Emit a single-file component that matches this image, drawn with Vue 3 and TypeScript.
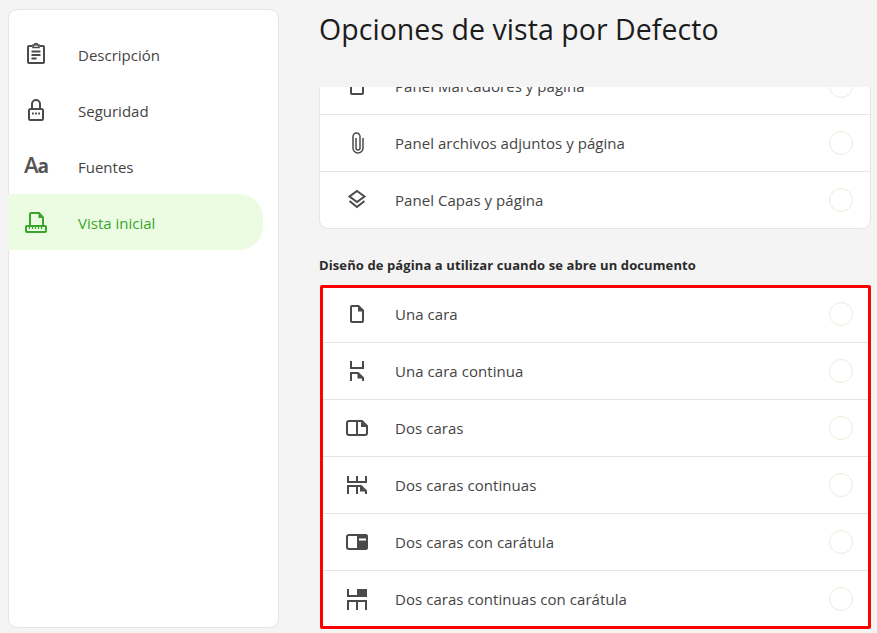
<script setup lang="ts">
interface Row { label: string; icon: string }
const nav: { label: string; icon: string; active?: boolean }[] = [
  { label: 'Descripción', icon: 'clip' },
  { label: 'Seguridad', icon: 'lock' },
  { label: 'Fuentes', icon: 'font' },
  { label: 'Vista inicial', icon: 'view', active: true },
]
const panels: Row[] = [
  { label: 'Panel Marcadores y página', icon: 'mark' },
  { label: 'Panel archivos adjuntos y página', icon: 'attach' },
  { label: 'Panel Capas y página', icon: 'layers' },
]
const layouts: Row[] = [
  { label: 'Una cara', icon: 'single' },
  { label: 'Una cara continua', icon: 'singleCont' },
  { label: 'Dos caras', icon: 'double' },
  { label: 'Dos caras continuas', icon: 'doubleCont' },
  { label: 'Dos caras con carátula', icon: 'cover' },
  { label: 'Dos caras continuas con carátula', icon: 'coverCont' },
]
</script>

<template>
  <div class="page">
    <aside class="side">
      <div v-for="n in nav" :key="n.label" class="nav" :class="{ active: n.active }">
        <span class="nav-icon">
          <svg v-if="n.icon === 'clip'" viewBox="0 0 24 24" width="24" height="24" fill="none" stroke="currentColor" stroke-width="2">
            <path d="M8 4H5a1 1 0 0 0-1 1v15a1 1 0 0 0 1 1h14a1 1 0 0 0 1-1V5a1 1 0 0 0-1-1h-3" />
            <path d="M9 5.500V3h2V1.800h2V3h2v2.500z" stroke-width="1.600" />
            <path d="M7.500 9.500h9M7.500 13h9M7.500 16.500h5" />
          </svg>
          <svg v-else-if="n.icon === 'lock'" viewBox="0 0 24 24" width="24" height="24" fill="none" stroke="currentColor" stroke-width="2">
            <rect x="5" y="11" width="14" height="11" rx="1.500" />
            <path d="M8 11V6a4 4 0 0 1 8 0v5" />
            <path d="M8 15.500h1.800M11.100 15.500h1.800M14.200 15.500H16" stroke-width="1.800" />
          </svg>
          <span v-else-if="n.icon === 'font'" class="aa"><span class="big">A</span><span class="small">a</span></span>
          <svg v-else viewBox="0 0 24 24" width="24" height="24" fill="none" stroke="currentColor" stroke-width="2">
            <path d="M6 15V4a1 1 0 0 1 1-1h8l4 4.500V15" />
            <path d="M14.500 3v5H19.500z" fill="currentColor" stroke="none" />
            <rect x="2" y="16" width="20" height="6" rx="1" />
            <path d="M5.500 17v2M8.500 17v2M11.500 17v2M14.500 17v2M17.500 17v2" stroke-width="1.200" />
          </svg>
        </span>
        <span class="nav-label">{{ n.label }}</span>
      </div>
    </aside>

    <main class="main">
      <h1 class="title">Opciones de vista por Defecto</h1>
      <div class="scroll">
        <section class="card panels">
          <div v-for="r in panels" :key="r.label" class="row">
            <span class="row-icon">
              <svg v-if="r.icon === 'mark'" viewBox="0 0 24 24" width="24" height="24" fill="none" stroke="currentColor" stroke-width="2">
                <rect x="6" y="3" width="12" height="17" rx="1" />
              </svg>
              <svg v-else-if="r.icon === 'attach'" viewBox="0 0 24 24" width="24" height="24" fill="none" stroke="currentColor" stroke-width="1.500">
                <path d="M11 7v10a2 2 0 0 0 4 0V5.500a3.500 3.500 0 0 0-7 0V17a5 5 0 0 0 10 0V7" />
              </svg>
              <svg v-else viewBox="0 0 24 24" width="24" height="24" fill="none" stroke="currentColor" stroke-width="2">
                <path d="M12 3 19.500 8.500 12 14 4.500 8.500z" />
                <path d="M4.500 13 12 19l7.500-6" />
              </svg>
            </span>
            <span class="row-label">{{ r.label }}</span>
            <span class="radio"></span>
          </div>
        </section>

        <h2 class="sub">Diseño de página a utilizar cuando se abre un documento</h2>

        <section class="card marked">
          <div v-for="r in layouts" :key="r.label" class="row">
            <span class="row-icon">
              <svg viewBox="0 0 24 24" width="24" height="24" fill="none" stroke="currentColor" stroke-width="2">
                <template v-if="r.icon === 'single'">
                  <path d="M7 4h6.500L18 8.500V19a1 1 0 0 1-1 1H7a1 1 0 0 1-1-1V5a1 1 0 0 1 1-1z" />
                  <path d="M13 4v5.500h5z" fill="currentColor" stroke="none" />
                </template>
                <template v-else-if="r.icon === 'singleCont'">
                  <path d="M6 2v7h12V2" />
                  <path d="M6 22v-8h7l5 5v3" />
                  <path d="M12.500 14v5.500H18z" fill="currentColor" stroke="none" />
                </template>
                <template v-else-if="r.icon === 'double'">
                  <path d="M4 5h13l5 5v7a2 2 0 0 1-2 2H4a2 2 0 0 1-2-2V7a2 2 0 0 1 2-2zM12 5v14" />
                  <path d="M16 5v6h6z" fill="currentColor" stroke="none" />
                </template>
                <template v-else-if="r.icon === 'doubleCont'">
                  <path d="M3 3v6h18V3M12 3v6" />
                  <path d="M3 21v-8h13l5 5v3M12 13v8" />
                  <path d="M15 13v5.500h6z" fill="currentColor" stroke="none" />
                </template>
                <template v-else-if="r.icon === 'cover'">
                  <rect x="2" y="5" width="20" height="14" rx="2" />
                  <path d="M12 4h8a3 3 0 0 1 3 3v10a3 3 0 0 1-3 3h-8z" fill="currentColor" stroke="none" />
                  <rect x="14" y="8.500" width="7" height="2" fill="#fff" stroke="none" />
                </template>
                <template v-else>
                  <path d="M3 2v7h9" />
                  <rect x="12" y="2" width="10" height="8" fill="currentColor" stroke="none" />
                  <path d="M3 23v-9h18v9M12 14v9" />
                </template>
              </svg>
            </span>
            <span class="row-label">{{ r.label }}</span>
            <span class="radio"></span>
          </div>
        </section>
      </div>
    </main>
  </div>
</template>

<style>
html, body { margin: 0; background: #f4f4f4; overflow: hidden; }
</style>

<style scoped>
.page {
  display: flex;
  height: 633px;
  width: 877px;
  box-sizing: border-box;
  padding: 9px 6px 5px 8px;
  font-family: "Open Sans", "Noto Sans", sans-serif;
  font-size: 15px;
  color: #444;
  background: #f4f4f4;
  overflow: hidden;
}
.side {
  width: 271px;
  flex: none;
  box-sizing: border-box;
  padding: 16px 15px 0 0;
  background: #fff;
  border: 1px solid #e5e5e5;
  border-radius: 9px;
}
.nav {
  display: flex;
  align-items: center;
  gap: 30px;
  height: 56px;
  margin-left: -1px;
  padding-left: 16px;
}
.nav-label { padding-top: 2px; }
.nav-icon {
  width: 24px;
  height: 24px;
  display: flex;
  align-items: center;
  justify-content: center;
  color: #4a4a4a;
}
.nav.active {
  background: #ebfce3;
  color: #38a52d;
  border-radius: 0 24px 24px 0;
}
.nav.active .nav-icon { color: #38a52d; }
.aa {
  display: flex;
  align-items: baseline;
  font-family: "Open Sans", sans-serif;
  line-height: 22px;
  margin: 0 0 2px 1px;
  color: #555;
}
.big { font-size: 22px; font-weight: 600; }
.small { font-size: 19px; font-weight: 700; margin-left: -1px; }
.main {
  margin-left: 40px;
  flex: 1;
  min-width: 0;
  display: flex;
  flex-direction: column;
  margin-top: -9px;
  height: 633px;
}
.title {
  margin: 0;
  height: 87px;
  flex: none;
  box-sizing: border-box;
  padding-top: 9px;
  font-size: 28.500px;
  line-height: 40px;
  font-weight: 400;
  color: #1c1c1c;
  letter-spacing: 0.05px;
}
.scroll {
  flex: 1;
  overflow: hidden;
}
.card {
  background: #fff;
  border: 1px solid #e5e5e5;
  border-radius: 9px;
}
.panels {
  margin-top: -29px;
  border-top: none;
}
.sub {
  margin: 27px 0 11px;
  font-size: 13px;
  line-height: 18px;
  font-weight: 700;
  color: #2b2b2b;
  letter-spacing: 0.1px;
}
.marked {
  margin-left: 1px;
  border: 3px solid #fe0000;
  border-radius: 2px;
}
.row {
  display: flex;
  align-items: center;
  height: 57px;
  box-sizing: border-box;
  border-top: 1px solid #e5e5e5;
  padding: 0 17px 0 25px;
}
.row:first-child { border-top: none; height: 56px; }
.marked .row { padding-left: 22px; padding-right: 15px; }
.marked .row:first-child { height: 54px; padding-bottom: 2px; }
.marked .row:last-child { height: 56px; }
.row-icon {
  width: 24px;
  height: 24px;
  color: #4a4a4a;
  flex: none;
}
.row-icon svg { display: block; }
.row-label {
  margin-left: 26px;
  flex: 1;
  letter-spacing: 0.05px;
}
.radio {
  width: 24px;
  height: 24px;
  box-sizing: border-box;
  border: 1px solid #e2f0dc;
  border-radius: 50%;
  flex: none;
}
</style>
